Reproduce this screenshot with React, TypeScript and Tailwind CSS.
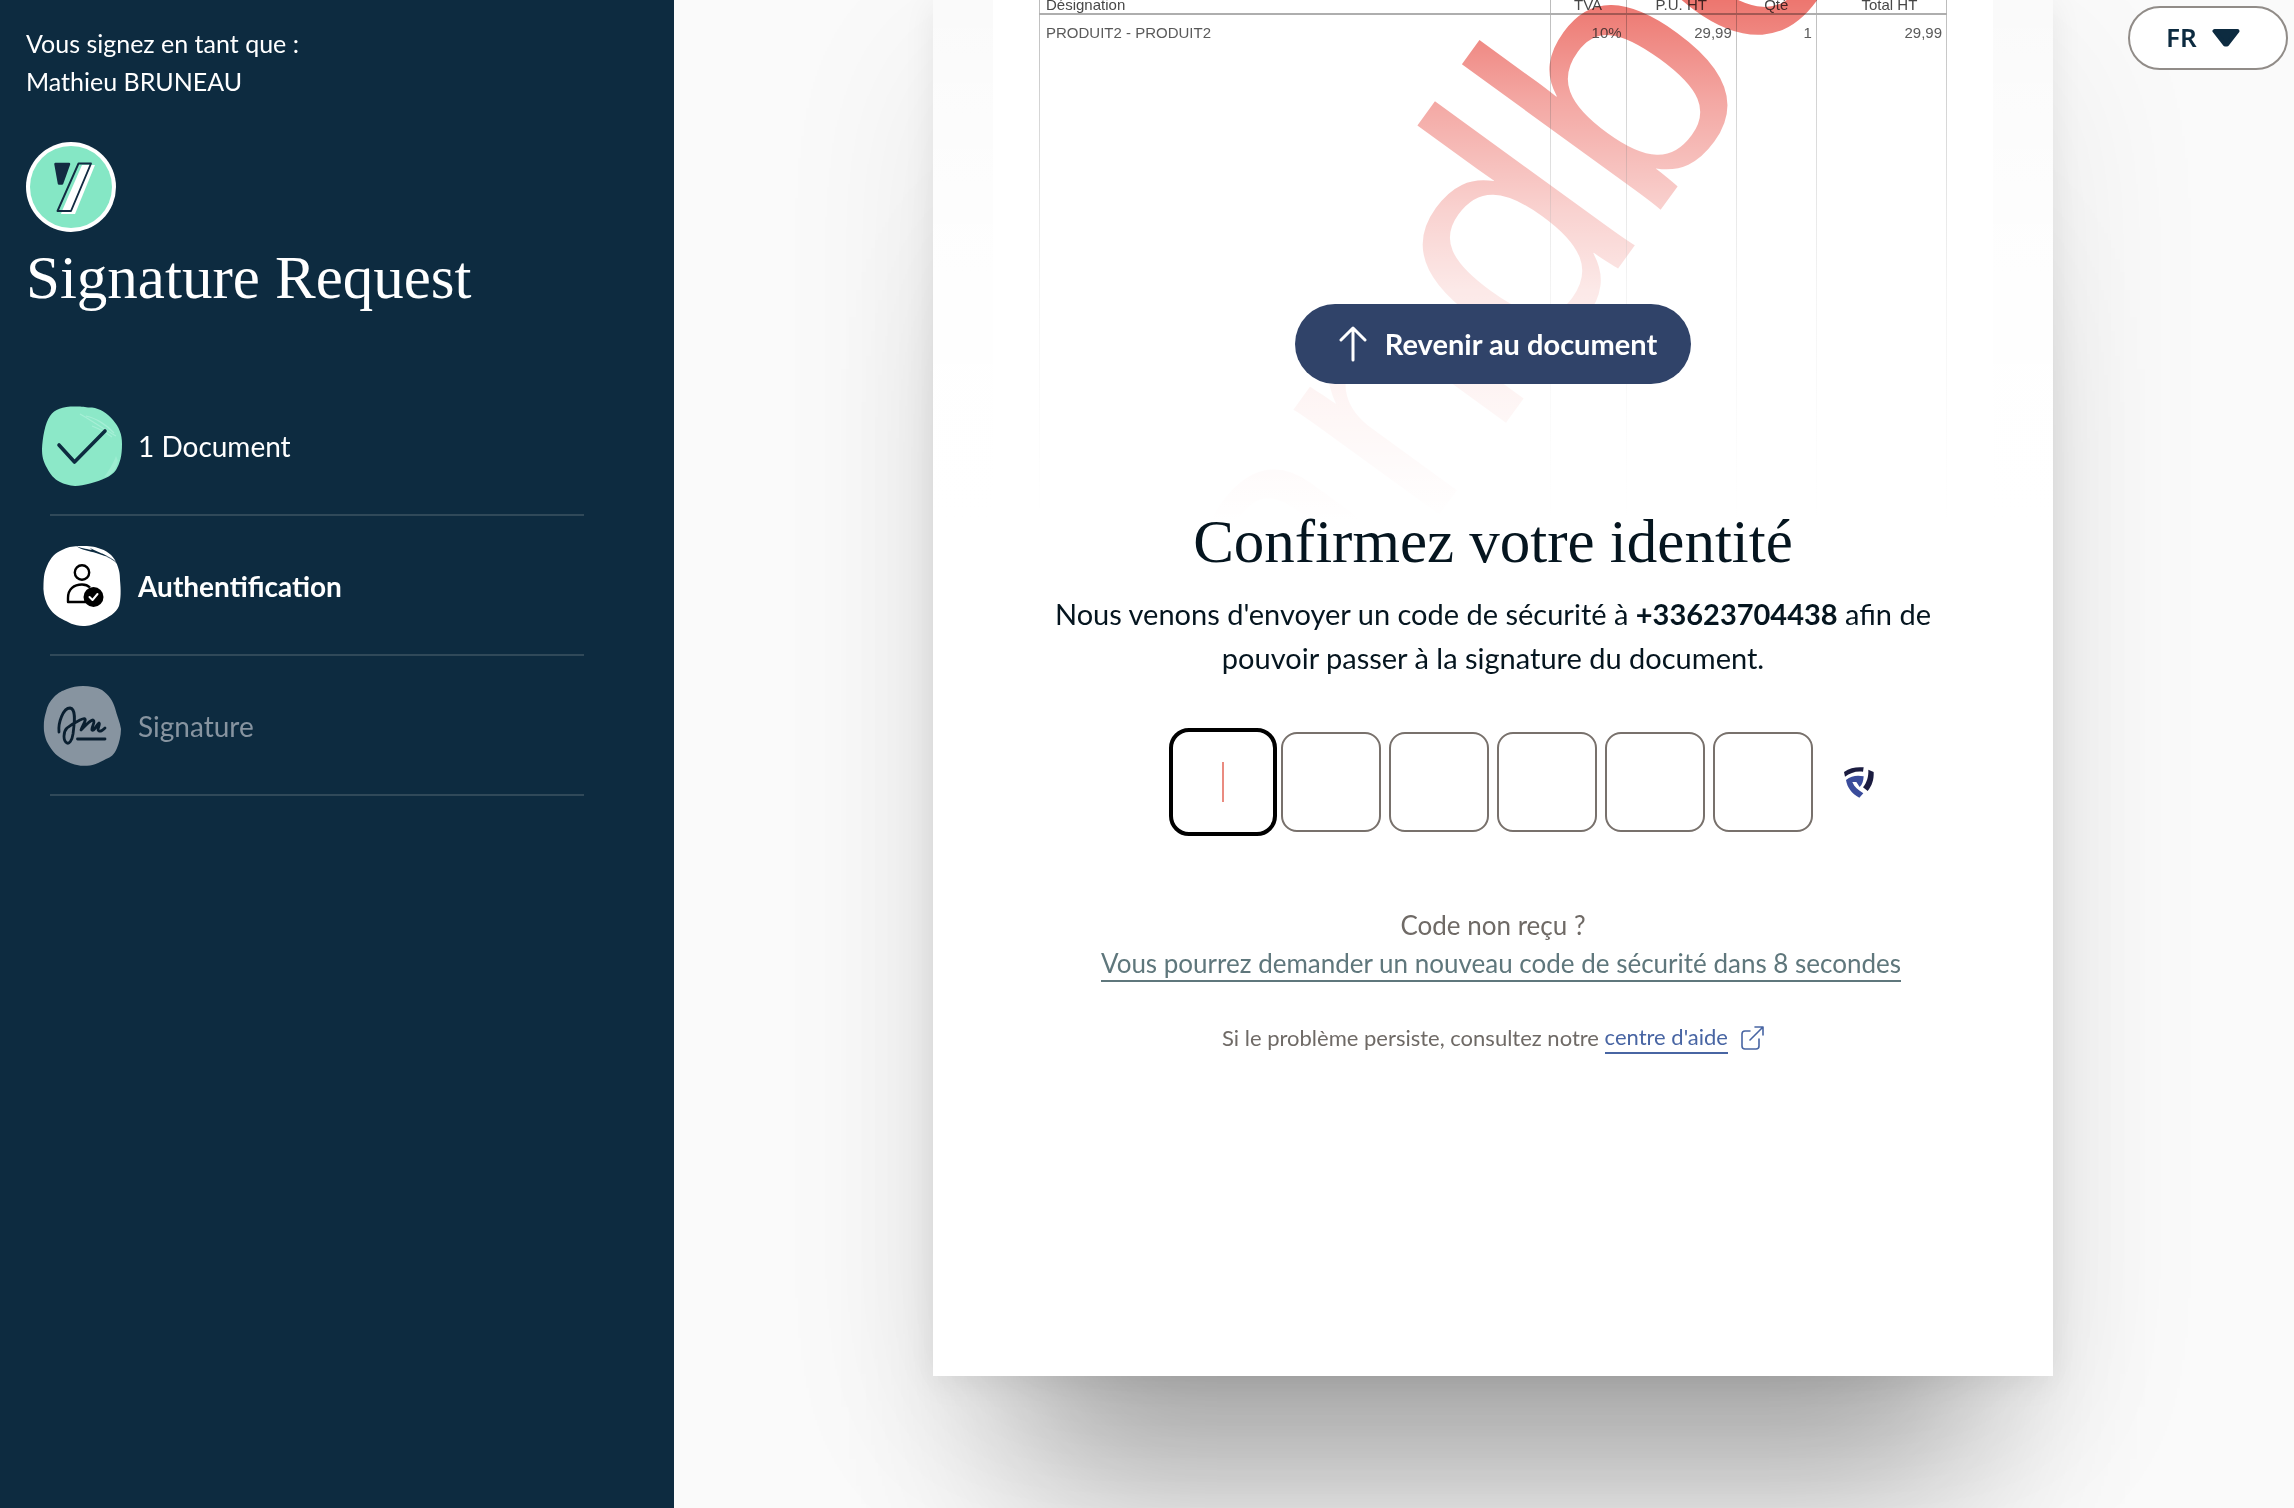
import React, { useState } from "react";

const lines = [
  { label: "Désignation", value: "PRODUIT2 - PRODUIT2", col: "w-[510px] text-left pl-1.5", cell: "pl-1.5 text-left" },
  { label: "TVA", value: "10%", col: "w-[76px] text-center", cell: "pr-1 text-right" },
  { label: "P.U. HT", value: "29,99", col: "w-[110px] text-center", cell: "pr-1 text-right" },
  { label: "Qté", value: "1", col: "w-[80px] text-center", cell: "pr-1 text-right" },
  { label: "Total HT", value: "29,99", col: "w-[130px] text-center pl-4", cell: "pr-1 text-right" },
];

function Logo() {
  return (
    <svg viewBox="0 0 90 90" className="size-[90px]" role="img" aria-label="Yousign">
      <circle cx="45" cy="45" r="45" fill="#fff" />
      <circle cx="45" cy="45" r="41" fill="#85e7c5" />
      <path d="M29.500 22H43L36 41.500H33Z" fill="#132b42" stroke="#132b42" strokeWidth="2.500" strokeLinejoin="round" />
      <path d="M56 23H69L49 72H35L36 69Z" fill="#fff" />
      <path d="M52.500 21.500H65L45 69H31.500Z" fill="none" stroke="#132b42" strokeWidth="1.900" strokeLinejoin="round" />
    </svg>
  );
}

function DocumentDone() {
  return (
    <svg viewBox="0 0 80 80" className="size-20 shrink-0" aria-hidden="true">
      <path
        d="M8 10C13 3 20 .5 33 .5C41 0 43 1.500 50 1.500C58 2.500 65 7 71 14C77 21 80 28 80 38C80 50 78 57 74 64C69 71 60 74 48 77.500C42 79 38 80 33 80C27 79.500 22 78 18 76C12 73 8 68 5 62C1 55 0 50 0 43C.5 32 3 17 8 10Z"
        fill="#8ce8c8"
      />
      <path d="M38 8C52 16 63 24 74 30M44 10C54 12 66 20 72 27M50 20C60 24 66 28 70 31" fill="none" stroke="#a6efd6" strokeWidth="1.200" />
      <path d="M62 71C66 66 71 58 74 50L76 55C74 63 71 67 66 70Z" fill="#9dedd1" />
      <path d="M17 39L32.500 56L63 25" fill="none" stroke="#0d2b40" strokeWidth="3.600" strokeLinecap="round" strokeLinejoin="round" />
    </svg>
  );
}

function IdentityBadge() {
  return (
    <svg viewBox="0 0 80 80" className="size-20 shrink-0" aria-hidden="true">
      <path
        d="M20 4C25 1 30 .5 36 0C45 0 50 0 56 2C64 4 71 9 74 16C77 23 78 27 78 34C79 44 79 53 77 60C74 67 67 71 59 75C51 79 47 80 41 80C32 80 26 76 20 73C12 69 8 64 5 58C2 51 1 45 1.500 38C2 30 2 27 5 20C9 11 13 7 20 4Z"
        fill="#fff"
      />
      <path d="M34 0C41 3 46 3 50 4L48 2C53 5 60 7 65 10C62 10 58 8 54 7C48 5 39 4 34 0Z" fill="#0d2b40" />
      <path d="M60 8C66 11 71 13 76 18" fill="none" stroke="#0d2b40" strokeWidth=".8" />
      <g fill="none" stroke="#000" strokeWidth="2.400" strokeLinejoin="round">
        <circle cx="40" cy="26.500" r="7.200" />
        <path d="M44 56H26V52C26 43 32 38.500 40 38.500C43 38.500 46 39.500 48 41.500" />
      </g>
      <circle cx="51.500" cy="51" r="10" fill="#000" />
      <path d="M47.500 51L50.500 54L55.500 48" fill="none" stroke="#fff" strokeWidth="2" strokeLinecap="round" strokeLinejoin="round" />
    </svg>
  );
}

function SignatureBadge() {
  return (
    <svg viewBox="0 0 80 80" className="size-20 shrink-0" aria-hidden="true">
      <path
        d="M25 3C30 1 35 0 41 0C48 0 54 1 60 4C67 9 71 15 73 22C75 30 78 36 79 43C79 50 77 57 75 62C72 69 69 71 64 73C58 76 53 79 48 79.500C43 80 39 80 35 79C30 78 26 76 22 74C15 70 11 66 8 61C4 55 3 51 2 45C1.500 38 2 32 4 26C5 20 8 15 12 11C17 6 20 5 25 3Z"
        fill="#8794a0"
      />
      <g fill="none" stroke="#0a1f30" strokeWidth="2.800" strokeLinecap="round" strokeLinejoin="round">
        <path d="M17 46C16 37 21 22 28 22C35 23 32 39 31 48C30 55 27 58 25 57C21 55 21 46 25 42C30 38 34 36 38 34C42 32 44 32 43 35C42 38 40 41 39 44C43 40 48 34 51 34C54 35 49 42 50 44C52 46 55 38 57 37C59 38 54 44 57 45C59 46 61 44 63 42" />
        <path d="M35.500 53H63" />
      </g>
    </svg>
  );
}

function Shield() {
  return (
    <svg viewBox="0 0 150 144" className="h-12 w-[50px]" role="img" aria-label="Code sécurisé">
      <path d="M30 42C48 29 68 26 89 28L87 41C67 38 49 44 33 56Z" fill="#1b1c40" />
      <path d="M103 35L119 42C120 65 114 83 101 99L87 88C99 72 104 56 103 35Z" fill="#1b1c40" />
      <path d="M36 66C52 53 70 51 89 55C88 70 85 80 77 87L67 72L55 72C61 87 72 96 88 106L76 119C52 106 40 89 36 66Z" fill="#3a4c9b" />
    </svg>
  );
}

const steps = [
  { label: "1 Document", icon: <DocumentDone />, tone: "text-white" },
  { label: "Authentification", icon: <IdentityBadge />, tone: "font-bold text-white" },
  { label: "Signature", icon: <SignatureBadge />, tone: "text-[#8794a0]" },
];

function Sidebar() {
  return (
    <aside className="w-[674px] shrink-0 bg-[#0d2b40] pt-6 pr-[90px] pl-[26px] text-white">
      <p className="text-[25px] leading-[38px]">
        Vous signez en tant que :<br />
        Mathieu BRUNEAU
      </p>
      <div className="mt-[42px]">
        <Logo />
      </div>
      <h1 className="mt-2 font-['Liberation_Serif'] text-[61px] leading-[76px] whitespace-nowrap">Signature Request</h1>
      <ol className="mt-[60px] pl-4">
        {steps.map((s) => (
          <li key={s.label}>
            <div className={`flex h-[138px] items-center gap-4 pt-0.5 text-[28px] leading-10 ${s.tone}`}>
              {s.icon}
              <span>{s.label}</span>
            </div>
            <div className="ml-2 h-0.5 bg-[#304959]" />
          </li>
        ))}
      </ol>
    </aside>
  );
}

function DocumentPreview() {
  return (
    <div className="relative h-[520px] overflow-hidden bg-[#fafafa] px-[60px] [grid-area:1/1]">
      <div className="h-full bg-white px-[46px]">
        <table className="h-full w-full table-fixed border-x border-[#aaa] font-['Liberation_Sans'] text-[15px] text-[#444]">
          <thead>
            <tr className="h-[14px] border-b-2 border-[#aaa]">
              {lines.map((l) => (
                <th key={l.label} scope="col" className={`border-x border-[#bbb] pb-1 text-[15px] leading-[8px] font-normal ${l.col}`}>
                  {l.label}
                </th>
              ))}
            </tr>
          </thead>
          <tbody>
            <tr className="align-top">
              {lines.map((l) => (
                <td key={l.label} className={`border-x border-[#bbb] pt-2 leading-5 ${l.cell}`}>
                  {l.value}
                </td>
              ))}
            </tr>
          </tbody>
        </table>
      </div>
      <svg viewBox="0 0 1120 520" className="absolute inset-0 h-full w-full mix-blend-multiply" aria-hidden="true">
        <text transform="translate(248 870) rotate(-54)" fontFamily="Liberation Sans" fontSize="340" fill="#ed766f">
          Sandbox
        </text>
      </svg>
      <div className="absolute inset-0 bg-[linear-gradient(to_bottom,transparent_0px,rgba(255,255,255,0.36)_100px,rgba(255,255,255,0.67)_210px,rgba(255,255,255,0.84)_290px,rgba(255,255,255,0.93)_400px,#fff_520px)]" />
    </div>
  );
}

function CodeInputs() {
  const [digits, setDigits] = useState(["", "", "", "", "", ""]);
  return (
    <div className="relative flex gap-2">
      {digits.map((d, i) => (
        <input
          key={i}
          aria-label={`Chiffre ${i + 1} du code`}
          inputMode="numeric"
          maxLength={1}
          value={d}
          onChange={(e) => setDigits(digits.map((v, n) => (n === i ? e.target.value : v)))}
          className={
            i === 0
              ? "size-[100px] rounded-2xl bg-white text-center text-[32px] caret-transparent outline-4 outline-black"
              : "size-[100px] rounded-2xl border-2 border-[#78716c] bg-white text-center text-[32px]"
          }
        />
      ))}
      <span className="absolute top-[30px] left-[49px] h-10 w-0.5 bg-[#ea8b80]" />
      <span className="absolute top-[26px] left-full ml-[21px]">
        <Shield />
      </span>
    </div>
  );
}

function Confirm() {
  return (
    <div className="relative flex flex-col items-center px-[106px] pt-[304px] pb-[322px] text-center text-[#05151f] [grid-area:1/1]">
      <button type="button" className="flex h-20 items-center gap-[18px] rounded-full bg-[#304369] pr-[34px] pl-11 text-[29px] font-bold text-white">
        <svg viewBox="0 0 28 36" className="h-9 w-7" fill="none" stroke="currentColor" strokeWidth="3" strokeLinecap="round" strokeLinejoin="round" aria-hidden="true">
          <path d="M14 34V2M2 14L14 2L26 14" />
        </svg>
        Revenir au document
      </button>
      <h2 className="mt-[120px] font-['Liberation_Serif'] text-[61px] leading-[76px] whitespace-nowrap">Confirmez votre identité</h2>
      <p className="mt-3 text-[29px] leading-[44px]">
        Nous venons d'envoyer un code de sécurité à <b>+33623704438</b> afin de
        <br />
        pouvoir passer à la signature du document.
      </p>
      <div className="mt-[52px]">
        <CodeInputs />
      </div>
      <p className="mt-[74px] text-[26px] leading-[38px] text-[#6f6a66]">Code non reçu ?</p>
      <button type="button" className="ml-4 border-b-2 border-[#5f777c] pt-0.5 text-[26px] leading-[34px] whitespace-nowrap text-[#5f777c]">
        Vous pourrez demander un nouveau code de sécurité dans 8 secondes
      </button>
      <p className="mt-10 flex items-center text-[22px] leading-[30px] text-[#6f6a66]">
        Si le problème persiste, consultez notre&nbsp;
        <a href="#aide" className="border-b-2 border-[#4865a3] text-[#4865a3]">
          centre d'aide
        </a>
        <svg viewBox="0 0 24 24" className="ml-3 size-6" fill="none" stroke="#4865a3" strokeWidth="1.600" strokeLinecap="round" strokeLinejoin="round" aria-hidden="true">
          <path d="M15 1H23V9M23 1L10 14M10 5H5A3 3 0 0 0 2 8V20A3 3 0 0 0 5 23H16A3 3 0 0 0 19 20V13" />
        </svg>
      </p>
    </div>
  );
}

function LanguagePicker() {
  return (
    <label className="absolute top-1.5 right-1.5 grid w-40 items-center font-['Noto_Sans'] font-semibold text-[#0d2b40]">
      <select aria-label="Langue" className="h-16 w-full appearance-none rounded-full border-2 border-[#918c88] bg-white pb-0.5 pl-9 text-[26px] [grid-area:1/1]">
        <option>FR</option>
        <option>EN</option>
      </select>
      <svg viewBox="0 0 28 18" className="pointer-events-none mr-12 h-[18px] w-7 justify-self-end [grid-area:1/1]" aria-hidden="true">
        <path d="M2.500 2H25.500L15 15.500H13Z" fill="#0d2b40" stroke="#0d2b40" strokeWidth="4" strokeLinejoin="round" />
      </svg>
    </label>
  );
}

export default function App() {
  return (
    <div className="flex min-h-screen font-['Lato',sans-serif]">
      <Sidebar />
      <main className="relative flex-1 overflow-hidden bg-[#fafafa] pl-[18px]">
        <section className="mx-auto grid w-full max-w-[1120px] bg-white shadow-[0_200px_160px_-90px_rgba(0,0,0,0.3),0_60px_160px_0_rgba(0,0,0,0.08),0_6px_30px_0_rgba(0,0,0,0.07)]">
          <DocumentPreview />
          <Confirm />
        </section>
        <LanguagePicker />
      </main>
    </div>
  );
}
